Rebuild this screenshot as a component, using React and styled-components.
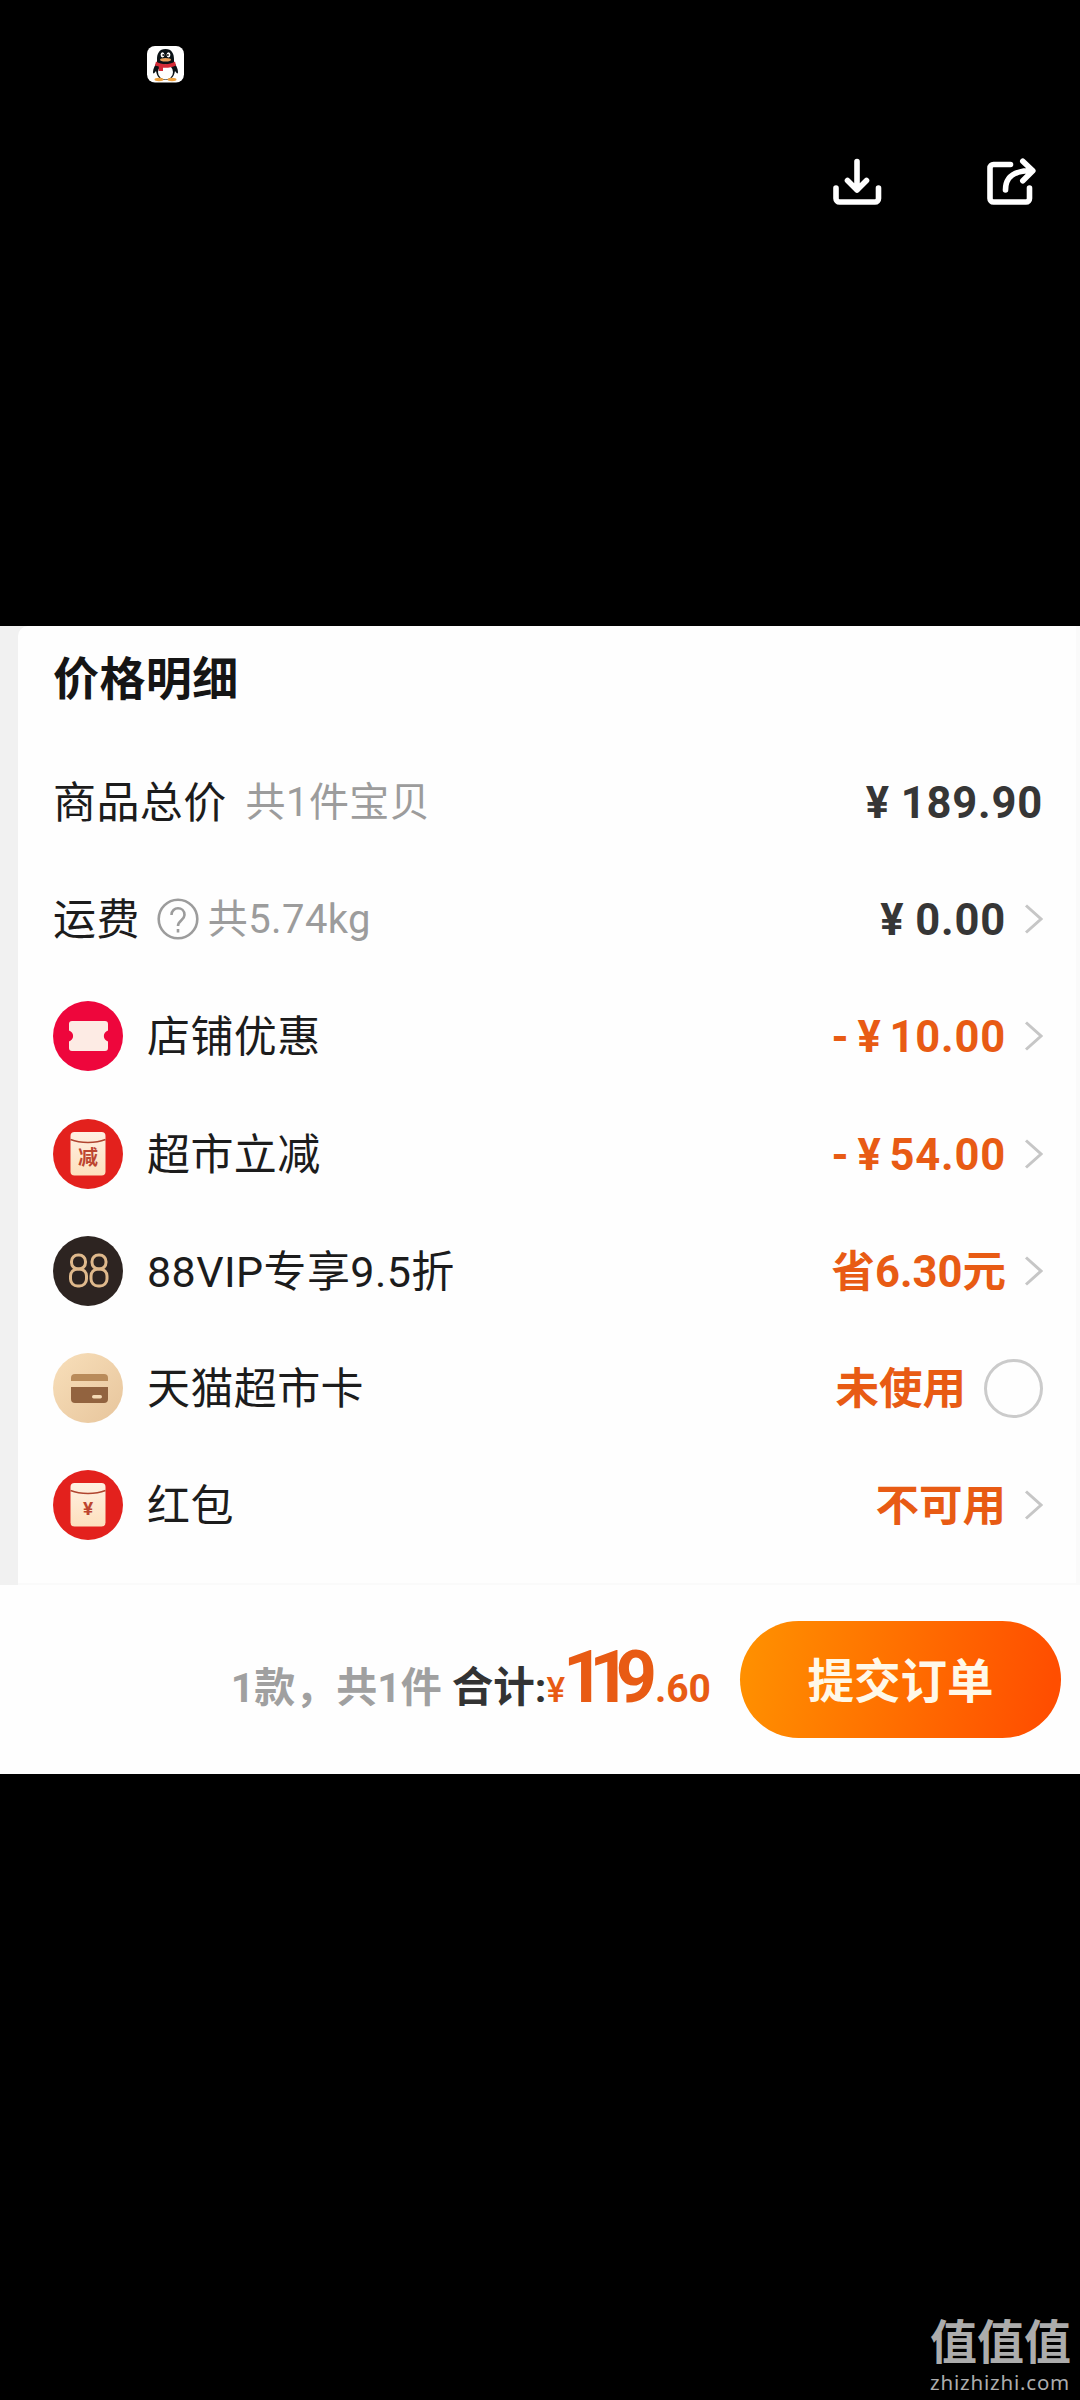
import React from 'react';
import styled, { createGlobalStyle } from 'styled-components';

const GlobalStyle = createGlobalStyle`
  * {
    box-sizing: border-box;
  }

  body {
    margin: 0;
    background: #000;
    font-family: Roboto, 'Noto Sans CJK SC', sans-serif;
  }
`;

const Page = styled.div`
  width: 1080px;
  height: 2400px;
  display: flex;
  flex-direction: column;
  background: #000;
  overflow: hidden;
`;

const ViewerTop = styled.header`
  height: 626px;
  flex: none;
`;

const StatusBar = styled.div`
  height: 128px;
  padding: 46px 0 0 147px;
`;

const ViewerActions = styled.div`
  display: flex;
  justify-content: flex-end;
  gap: 104px;
  padding: 25px 40px 0 0;
`;

const Sheet = styled.main`
  height: 1148px;
  flex: none;
  display: flex;
  flex-direction: column;
  background: #f1f1f1;
`;

const PriceCard = styled.section`
  height: 959px;
  margin: 0 0 0 18px;
  padding: 0 33px 0 35px;
  background: #fefefe;
  border-right: 4px solid #fafafa;
  border-bottom: 2px solid #fafafa;
  border-radius: 10px 0 0 0;
`;

const CardTitle = styled.h2`
  margin: 0;
  height: 117px;
  padding-top: 18px;
  font-size: 46px;
  line-height: 70px;
  letter-spacing: 0.4px;
  font-weight: 700;
  color: #151515;
`;

const Row = styled.div`
  height: 117.3px;
  display: flex;
  align-items: center;
`;

const RowIcon = styled.div`
  width: 70px;
  height: 70px;
  margin-right: 24px;
  flex: none;

  svg {
    display: block;
  }
`;

const Label = styled.span`
  padding-top: 2px;
  font-size: 43px;
  line-height: 60px;
  letter-spacing: 0.4px;
  color: #1c1c1c;
  white-space: nowrap;
`;

const Note = styled.span`
  margin-left: ${props => props.$gap};
  padding-top: 2px;
  font-size: 40px;
  line-height: 60px;
  letter-spacing: 0.4px;
  color: #9c9c9c;
  white-space: nowrap;
`;

const HelpIcon = styled.svg`
  margin-left: 17px;
  flex: none;
`;

const Value = styled.div`
  margin-left: auto;
  padding-top: 4px;
  display: flex;
  align-items: baseline;
  gap: ${props => (props.$orange ? '8px' : '11px')};
  font-size: 43.5px;
  line-height: 60px;
  font-weight: 700;
  letter-spacing: ${props => (props.$text ? '0' : '0.8px')};
  color: ${props => (props.$orange ? '#e85b14' : '#363636')};
  white-space: nowrap;
`;

const Arrow = styled.svg`
  margin-left: 17px;
  flex: none;
`;

const Radio = styled.span`
  width: 59px;
  height: 59px;
  margin-left: 18px;
  border: 3px solid #cbcbcb;
  border-radius: 50%;
  flex: none;
`;

const SubmitBar = styled.footer`
  flex: 1;
  display: flex;
  justify-content: flex-end;
  align-items: flex-start;
  padding: 36px 19px 0 0;
  background: #fefefe;
`;

const Summary = styled.div`
  display: flex;
  align-items: baseline;
  height: 117px;
  margin-right: 29px;
  line-height: 114px;
  font-weight: 700;
  white-space: nowrap;
`;

const Count = styled.span`
  font-size: 41px;
  color: #a0a0a0;
`;

const TotalLabel = styled.span`
  margin-left: 10px;
  font-size: 41.5px;
  color: #333;
`;

const TotalPart = styled.span`
  margin-left: ${props => props.$shift || '0'};
  font-size: ${props => props.$size};
  letter-spacing: ${props => props.$spacing || '0'};
  font-weight: ${props => props.$weight || 700};
  color: #e85b14;
`;

const SubmitButton = styled.button`
  width: 321px;
  height: 117px;
  padding: 0 0 4px 0;
  border: none;
  border-radius: 59px;
  background: linear-gradient(100deg, #ff9200 0%, #ff7200 45%, #ff4e00 95%);
  color: #fff8e8;
  font-family: inherit;
  font-size: 46.5px;
  font-weight: 700;
`;

const ViewerBottom = styled.div`
  flex: 1;
  display: flex;
  justify-content: flex-end;
  align-items: flex-end;
  padding: 0 9px 4px 0;
`;

const Watermark = styled.div`
  width: 141px;
  color: #acacac;
`;

const WatermarkName = styled.div`
  font-size: 47px;
  line-height: 50px;
  font-weight: 700;
`;

const WatermarkSite = styled.div`
  font-family: 'Noto Sans', sans-serif;
  font-size: 20.5px;
  line-height: 28px;
  letter-spacing: 0.8px;
  white-space: nowrap;
`;

const PenguinIcon = () => (
  <svg width="37" height="37" viewBox="0 0 37 37">
    <rect width="37" height="36.5" rx="8" fill="#fff" />
    <path d="M18.500 3C12 3 10 8 10 13v3c-2 3-4 7-4 10 0 2 1 2 3-1 1 6 4 9 9.500 9s8.500-3 9.500-9c2 3 3 3 3 1 0-3-2-7-4-10v-3c0-5-2-10-8.500-10z" fill="#0b1216" />
    <ellipse cx="18.500" cy="26" rx="7.500" ry="7.500" fill="#fff" />
    <ellipse cx="12" cy="33.500" rx="4.500" ry="1.700" fill="#efa13c" />
    <ellipse cx="25" cy="33.500" rx="4.500" ry="1.700" fill="#efa13c" />
    <ellipse cx="15.500" cy="8.800" rx="1.900" ry="2.600" fill="#fff" />
    <ellipse cx="21.500" cy="8.800" rx="1.900" ry="2.600" fill="#fff" />
    <circle cx="16.200" cy="9" r="0.900" fill="#111" />
    <circle cx="20.900" cy="9" r="0.900" fill="#111" />
    <ellipse cx="18.500" cy="13.700" rx="5.500" ry="1.800" fill="#e8a05a" />
    <path d="M9 15.500c6 3.500 13 3.500 19 0l1 4c-4 2-9 2.600-13 2.200V25h-4.200v-4.500L8 19.500z" fill="#d42a36" />
  </svg>
);

const DownloadIcon = () => (
  <svg width="50" height="54" viewBox="0 0 50 54" fill="none" stroke="#fff" strokeWidth="5.600" strokeLinecap="round" strokeLinejoin="round">
    <path d="M4 35v10.500a3.500 3.500 0 0 0 3.500 3.500h35.500a3.500 3.500 0 0 0 3.500-3.500V35" />
    <path d="M25 8.500V37M15.500 27.500 25 37l9.500-9.500" />
  </svg>
);

const ShareIcon = () => (
  <svg width="54" height="54" viewBox="0 0 54 54" fill="none" stroke="#fff" strokeWidth="5.600" strokeLinecap="round" strokeLinejoin="round">
    <path d="M24.500 11.500H7.500A3.500 3.500 0 0 0 4 15v30.500A3.500 3.500 0 0 0 7.500 49h32.500a3.500 3.500 0 0 0 3.500-3.500V35" />
    <path d="M19.500 37c0-13 8-19.500 27-19.500M36.800 8.300l10 9.500-10 10" />
  </svg>
);

const CouponIcon = () => (
  <svg width="70" height="70" viewBox="0 0 70 70">
    <circle cx="35" cy="35" r="35" fill="#ee063c" />
    <path d="M19 20h33a3 3 0 0 1 3 3v6.500c-5.500 2-5.500 9 0 11V47a3 3 0 0 1-3 3H19a3 3 0 0 1-3-3v-6.500c5.500-2 5.500-9 0-11V23a3 3 0 0 1 3-3z" fill="#fdebe4" />
  </svg>
);

const EnvelopeIcon = ({ mark, small }) => (
  <svg width="70" height="70" viewBox="0 0 70 70">
    <defs>
      <linearGradient id="paper" x1="0" y1="0" x2="0" y2="1">
        <stop offset="0" stopColor="#fff0e2" />
        <stop offset="1" stopColor="#fde0bd" />
      </linearGradient>
    </defs>
    <circle cx="35" cy="35" r="35" fill="#e3211d" />
    <rect x="17.500" y="13" width="35" height="43.500" rx="4" fill="url(#paper)" />
    <path d="M17.500 20.500c10 4 25 4 35 0" fill="none" stroke="#b0452f" strokeWidth="1.600" />
    <text x="35" y={small ? 45 : 46} textAnchor="middle" fontSize={small ? 19 : 20} fontWeight="700" fill="#bd4530">{mark}</text>
  </svg>
);

const VipIcon = () => (
  <svg width="70" height="70" viewBox="0 0 70 70">
    <circle cx="35" cy="35" r="35" fill="#2d2421" />
    <g fill="none" stroke="#dfb98c" strokeWidth="3">
      <rect x="18.500" y="19" width="14" height="14" rx="6.500" />
      <rect x="17.500" y="33" width="16" height="17" rx="7" />
      <rect x="39" y="19" width="14" height="14" rx="6.500" />
      <rect x="38" y="33" width="16" height="17" rx="7" />
    </g>
  </svg>
);

const CardIcon = () => (
  <svg width="70" height="70" viewBox="0 0 70 70">
    <defs>
      <linearGradient id="sand" x1="0" y1="0" x2="1" y2="1">
        <stop offset="0" stopColor="#f8dfba" />
        <stop offset="1" stopColor="#e7c59c" />
      </linearGradient>
    </defs>
    <circle cx="35" cy="35" r="35" fill="url(#sand)" />
    <path d="M22 21h29a4 4 0 0 1 4 4v3H18v-3a4 4 0 0 1 4-4z" fill="#b98b5a" />
    <path d="M18 34h37v12a4 4 0 0 1-4 4H22a4 4 0 0 1-4-4z" fill="#92633f" />
    <rect x="39" y="42" width="10" height="3.500" rx="1.700" fill="#f4d9b4" />
  </svg>
);

const Chevron = () => (
  <Arrow width="20" height="32" viewBox="0 0 20 32" fill="none" stroke="#c6c6c6" strokeWidth="3">
    <path d="M3 2.500 18 16 3 29.500" />
  </Arrow>
);

const discounts = [
  { icon: <CouponIcon />, label: '店铺优惠', value: ['-', '¥', '10.00'] },
  { icon: <EnvelopeIcon mark="减" />, label: '超市立减', value: ['-', '¥', '54.00'] },
  { icon: <VipIcon />, label: '88VIP专享9.5折', value: ['省6.30元'] },
  { icon: <CardIcon />, label: '天猫超市卡', value: ['未使用'], radio: true },
  { icon: <EnvelopeIcon mark="¥" small />, label: '红包', value: ['不可用'] },
];

function App() {
  return (
    <Page>
      <GlobalStyle />
      <ViewerTop>
        <StatusBar>
          <PenguinIcon />
        </StatusBar>
        <ViewerActions>
          <DownloadIcon />
          <ShareIcon />
        </ViewerActions>
      </ViewerTop>

      <Sheet>
        <PriceCard>
          <CardTitle>价格明细</CardTitle>
          <Row>
            <Label>商品总价</Label>
            <Note $gap="19px">共1件宝贝</Note>
            <Value>
              <span>¥</span>
              <span>189.90</span>
            </Value>
          </Row>
          <Row>
            <Label>运费</Label>
            <HelpIcon width="42" height="42" viewBox="0 0 42 42" fill="none" stroke="#9c9c9c" strokeWidth="2.600">
              <circle cx="21" cy="21" r="19.300" />
              <path d="M14.500 17c0-9 13-9 13 0 0 5-6.500 5.500-6.500 11" />
              <path d="M21 31v3.500" />
            </HelpIcon>
            <Note $gap="9px">共5.74kg</Note>
            <Value>
              <span>¥</span>
              <span>0.00</span>
            </Value>
            <Chevron />
          </Row>
          {discounts.map((item) => (
            <Row key={item.label}>
              <RowIcon>{item.icon}</RowIcon>
              <Label>{item.label}</Label>
              <Value $orange $text={item.value.length === 1}>
                {item.value.map((part) => (
                  <span key={part}>{part}</span>
                ))}
              </Value>
              {item.radio ? <Radio /> : <Chevron />}
            </Row>
          ))}
        </PriceCard>

        <SubmitBar>
          <Summary>
            <Count>1款，共1件</Count>
            <TotalLabel>合计:</TotalLabel>
            <TotalPart $size="35px" $weight={500}>¥</TotalPart>
            <TotalPart $size="72px" $spacing="-15px" $shift="-2px">11</TotalPart>
            <TotalPart $size="72px">9</TotalPart>
            <TotalPart $size="39px" $shift="-2px">.60</TotalPart>
          </Summary>
          <SubmitButton>提交订单</SubmitButton>
        </SubmitBar>
      </Sheet>

      <ViewerBottom>
        <Watermark>
          <WatermarkName>值值值</WatermarkName>
          <WatermarkSite>zhizhizhi.com</WatermarkSite>
        </Watermark>
      </ViewerBottom>
    </Page>
  );
}

export default App;
